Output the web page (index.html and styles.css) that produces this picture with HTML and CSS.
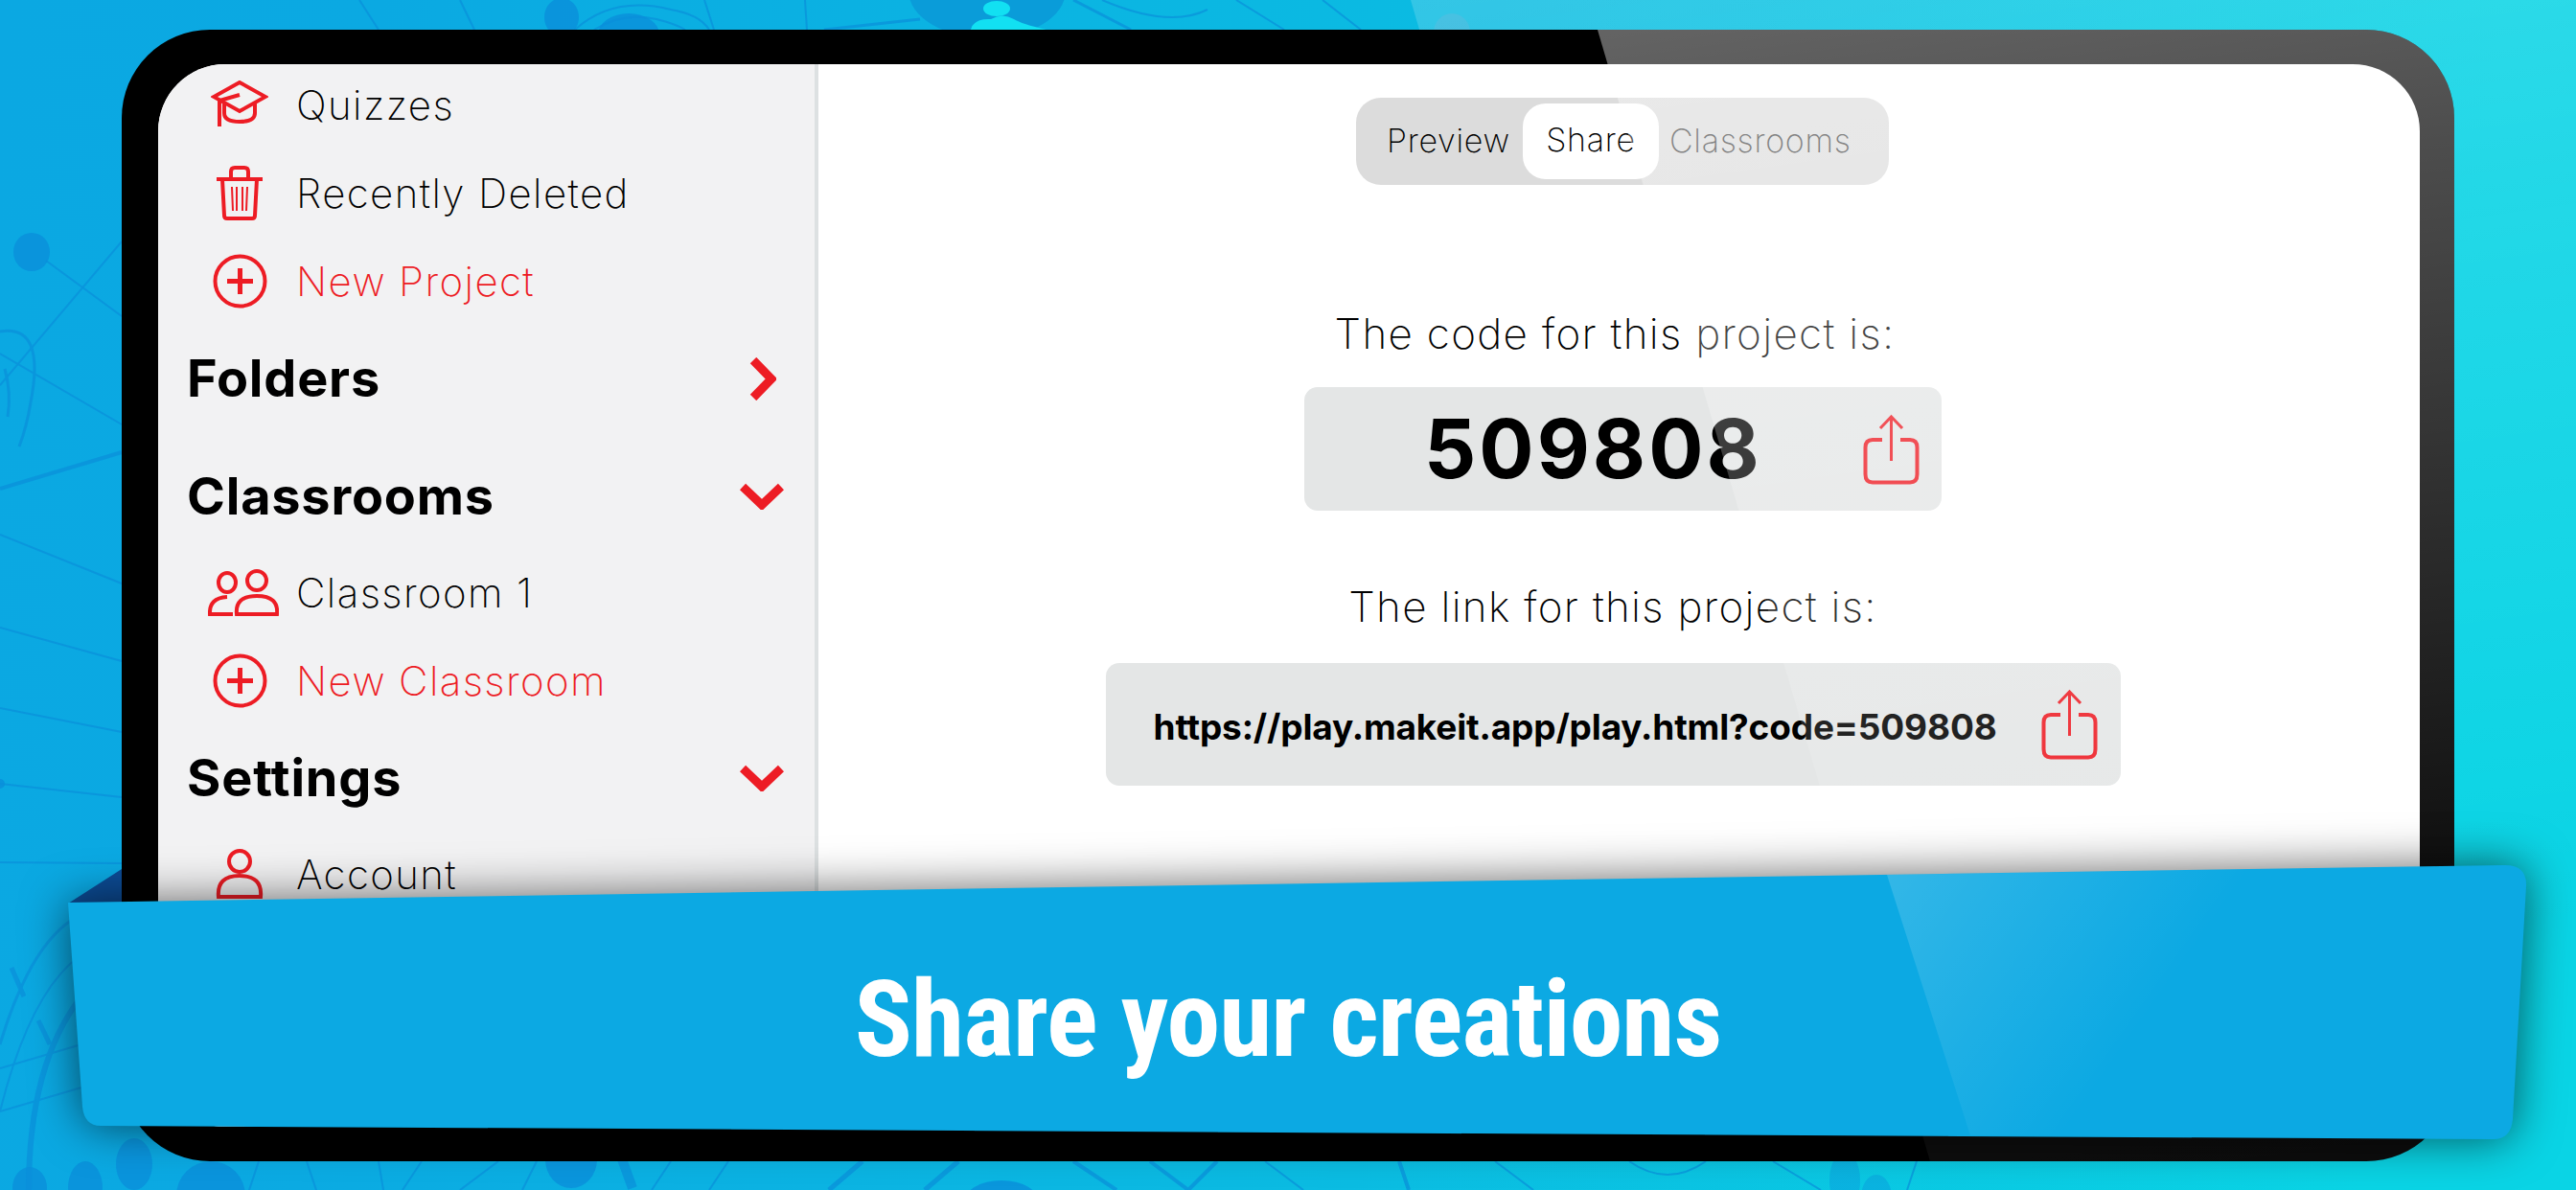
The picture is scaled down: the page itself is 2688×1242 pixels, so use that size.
FILE: index.html
```html
<!DOCTYPE html>
<html lang="en">
<head>
  <meta charset="UTF-8" />
  <title>Share your creations</title>
  <link rel="stylesheet" href="styles.css">
</head>
<body>

  <!-- backdrop pattern -->
  <svg class="backdrop" viewBox="0 0 2688 1242">
    <g fill="#0a8fdb" opacity="0.8">
      <ellipse cx="33" cy="263" rx="19" ry="20" />
      <circle cx="0" cy="818" r="5" />
      <ellipse cx="586" cy="18" rx="18" ry="20" />
      <ellipse cx="656" cy="36" rx="32" ry="22" />
      <ellipse cx="140" cy="1215" rx="19" ry="27" />
      <ellipse cx="89" cy="1240" rx="18" ry="28" />
      <ellipse cx="31" cy="1240" rx="18" ry="22" />
      <ellipse cx="220" cy="1248" rx="36" ry="36" />
      <ellipse cx="596" cy="1210" rx="27" ry="30" />
      <ellipse cx="1045" cy="1256" rx="40" ry="24" />
      <ellipse cx="1925" cy="1232" rx="16" ry="30" opacity="0.45" />
      <ellipse cx="1958" cy="1250" rx="16" ry="24" opacity="0.45" />
    </g>
    <ellipse cx="1030" cy="-10" rx="82" ry="50" fill="#0a9cd9" />
    <ellipse cx="1040" cy="9" rx="14" ry="8" fill="#12e0f2" />
    <path d="M1013 31 Q1016 19 1034 20 Q1046 13 1058 20 Q1066 25 1092 31 Z" fill="#12e0f2" />
    <ellipse cx="1515" cy="34" rx="19" ry="20" fill="#2fb4dc" opacity="0.7" />
    <g fill="none" stroke="#0a8fdb" stroke-width="2" opacity="0.7">
      <path d="M48 272 L127 330" />
      <path d="M0 402 L127 252" />
      <path d="M0 369 L127 443" />
      <path d="M0 510 L127 472" stroke-width="4" />
      <path d="M0 558 L127 609" />
      <path d="M0 655 L127 690" />
      <path d="M0 739 L127 764" />
      <path d="M0 818 L127 832" />
      <path d="M0 900 L127 901" />
      <path d="M0 346 Q48 338 32 420 Q28 445 20 466" stroke-width="3" />
      <path d="M5 385 Q12 410 8 435" stroke-width="3" />
      <path d="M0 1090 Q30 990 75 960" stroke-width="3" />
      <path d="M0 1160 Q30 1040 80 1000" stroke-width="2" />
      <path d="M30 1242 Q30 1110 85 1040" stroke-width="6" />
      <path d="M0 1115 L85 1090" />
      <path d="M0 1160 L85 1135" />
      <path d="M12 1010 L25 1040" stroke-width="5" />
      <path d="M40 1065 L52 1090" stroke-width="5" />
      <path d="M375 0 L395 31" />
      <path d="M480 0 L495 31" />
      <path d="M600 31 Q640 -5 700 10 Q730 15 740 31" />
      <path d="M620 31 Q650 12 685 20 Q705 25 715 31" />
      <path d="M735 0 L745 31" />
      <path d="M840 0 L842 31" />
      <path d="M860 31 L960 20" stroke-width="3" />
      <path d="M1120 0 L1180 31" stroke-width="3" />
      <path d="M1150 0 Q1220 30 1260 10" />
      <path d="M1290 0 L1340 31" />
      <path d="M1380 0 L1420 31" />
      <path d="M270 1212 L260 1242" />
      <path d="M320 1212 L330 1242" />
      <path d="M395 1212 L400 1242" />
      <path d="M440 1212 L420 1242" />
      <path d="M520 1212 L480 1242" />
      <path d="M560 1212 L545 1242" />
      <path d="M700 1212 L680 1242" />
      <path d="M760 1212 L740 1242" />
      <path d="M900 1212 L865 1242" stroke-width="5" />
      <path d="M1000 1212 L965 1242" stroke-width="5" />
      <path d="M1120 1212 L1165 1242" stroke-width="4" />
      <path d="M1200 1212 L1240 1242" stroke-width="4" />
      <path d="M1270 1212 L1240 1242" stroke-width="4" />
      <path d="M1320 1212 L1360 1242" />
      <path d="M1460 1212 L1470 1242" stroke-width="4" />
      <path d="M1560 1212 L1600 1242" />
      <path d="M1700 1212 Q1740 1240 1780 1212" />
      <path d="M1850 1212 L1900 1242" />
      <path d="M2000 1212 L1990 1242" />
    </g>
    <path d="M640 1185 L660 1240" stroke="#0a8fdb" stroke-width="10" opacity="0.7" />
  </svg>
  <div class="backdrop-gloss"></div>

  <div class="device">
    <div class="screen">

      <div class="sidebar">
        <div class="row first">
          <span class="row-icon">
            <svg width="60" height="50" viewBox="0 0 60 50" class="line">
              <path d="M30 2 L57 17 L30 32 L3 17 Z" />
              <path d="M14 24 V34 Q14 43 30 43 Q46 43 46 34 V24" />
              <path d="M30 15 L9 21 V48" />
            </svg>
          </span>
          Quizzes
        </div>
        <div class="row">
          <span class="row-icon">
            <svg width="50" height="57" viewBox="0 0 50 57" class="line">
              <path d="M1 14 H49" />
              <path d="M16 14 V6 Q16 2 20 2 H30 Q34 2 34 6 V14" />
              <path d="M7 14 L9 52 Q9 55 12 55 H38 Q41 55 41 52 L43 14" />
              <path d="M17 22 L18 47 M22 22 V47 M28 22 V47 M33 22 L32 47" stroke-width="2" />
            </svg>
          </span>
          Recently Deleted
        </div>
        <div class="row add">
          <span class="row-icon">
            <svg width="57" height="57" viewBox="0 0 57 57" class="line">
              <circle cx="28.5" cy="28.5" r="26" />
              <path d="M28.5 15 V42 M15 28.5 H42" stroke-width="5" />
            </svg>
          </span>
          New Project
        </div>

        <div class="section section-folders">
          Folders
          <svg width="28" height="45" viewBox="0 0 28 45" class="chevron chevron-right">
            <path d="M4 3 L23 22.5 L4 42" />
          </svg>
        </div>

        <div class="section">
          Classrooms
          <svg width="46" height="28" viewBox="0 0 46 28" class="chevron">
            <path d="M3 4 L23 23 L43 4" />
          </svg>
        </div>
        <div class="row">
          <span class="row-icon">
            <svg width="74" height="49" viewBox="0 0 74 49" class="line people">
              <ellipse cx="20" cy="14" rx="9" ry="10" />
              <ellipse cx="51" cy="12" rx="10" ry="10" />
              <path d="M26 47 H2 Q1 30 20 29" />
              <path d="M30 47 Q28 28 51 28 Q74 28 72 47 Z" />
            </svg>
          </span>
          Classroom 1
        </div>
        <div class="row add">
          <span class="row-icon">
            <svg width="57" height="57" viewBox="0 0 57 57" class="line">
              <circle cx="28.5" cy="28.5" r="26" />
              <path d="M28.5 15 V42 M15 28.5 H42" stroke-width="5" />
            </svg>
          </span>
          New Classroom
        </div>

        <div class="section">
          Settings
          <svg width="46" height="28" viewBox="0 0 46 28" class="chevron">
            <path d="M3 4 L23 23 L43 4" />
          </svg>
        </div>
        <div class="row">
          <span class="row-icon">
            <svg width="50" height="53" viewBox="0 0 50 53" class="line">
              <ellipse cx="25" cy="13" rx="11" ry="11" />
              <path d="M3 50 Q1 28 25 28 Q49 28 47 50 Z" />
            </svg>
          </span>
          Account
        </div>
      </div>

      <div class="main">
        <div class="tabs">
          <div class="tab tab-preview">Preview</div>
          <div class="tab tab-active">Share</div>
          <div class="tab tab-rooms">Classrooms</div>
        </div>

        <div class="label label-code">The code for this project is:</div>
        <div class="card card-code">
          <span class="code">509808</span>
          <svg width="59" height="74" viewBox="0 0 59 74" class="line share">
            <path d="M20 27 H10 Q2.500 27 2.500 35 V63 Q2.500 71.500 10 71.500 H49 Q56.500 71.500 56.500 63 V35 Q56.500 27 49 27 H39" />
            <path d="M29.500 49 V3 M18 15 L29.500 3 L41 15" stroke-width="3" />
          </svg>
        </div>

        <div class="label label-link">The link for this project is:</div>
        <div class="card card-link">
          <span class="link">https://play.makeit.app/play.html?code=509808</span>
          <svg width="59" height="74" viewBox="0 0 59 74" class="line share">
            <path d="M20 27 H10 Q2.500 27 2.500 35 V63 Q2.500 71.500 10 71.500 H49 Q56.500 71.500 56.500 63 V35 Q56.500 27 49 27 H39" />
            <path d="M29.500 49 V3 M18 15 L29.500 3 L41 15" stroke-width="3" />
          </svg>
        </div>
      </div>

    </div>
    <div class="device-gloss"></div>
  </div>

  <svg class="banner-shape" viewBox="0 0 2688 1242">
    <defs>
      <linearGradient id="bannerGloss" gradientUnits="userSpaceOnUse" x1="1969" y1="913" x2="2220" y2="1090">
        <stop offset="0" stop-color="#fff" stop-opacity="0.16" />
        <stop offset="1" stop-color="#fff" stop-opacity="0" />
      </linearGradient>
    </defs>
    <polygon points="71,943 127,907 127,943" fill="#0c4b94" />
    <path class="banner-fill" d="M71 942 L2612 903 Q2637 902 2636 925 L2622 1168 Q2620 1190 2600 1189 L105 1175 Q88 1175 86 1155 Z" />
    <path d="M1969 913 L2612 903 Q2637 902 2636 925 L2622 1168 Q2620 1190 2600 1189 L2056 1185 Z" fill="url(#bannerGloss)" />
  </svg>
  <div class="banner-title">Share your creations</div>

</body>
</html>
```

FILE: styles.css
```css
html, body {
  margin: 0;
  padding: 0;
  height: 100%;
}

body {
  position: relative;
  box-sizing: border-box;
  height: 1242px;
  overflow: hidden;
  padding: 31px 127px 30px 127px;
  font-family: Inter, "Liberation Sans", sans-serif;
  background: linear-gradient(97deg, #0ba8e2 0%, #0ba9e2 14%, #0bbce2 55%, #0ad4e5 92%);
}

.backdrop {
  position: absolute;
  left: 0;
  top: 0;
  width: 2688px;
  height: 1242px;
}

.backdrop-gloss {
  position: absolute;
  left: 0;
  top: 0;
  width: 2688px;
  height: 1242px;
  clip-path: polygon(1472px 0, 1836px 1242px, 2688px 1242px, 2688px 0);
  background: linear-gradient(172deg, rgba(255, 255, 255, 0.2) 0%, rgba(255, 255, 255, 0.09) 40%, rgba(255, 255, 255, 0) 85%);
}

.device {
  position: relative;
  box-sizing: border-box;
  width: 2434px;
  height: 1181px;
  padding: 36px 36px 36px 38px;
  background: #000;
  border-radius: 92px;
  overflow: hidden;
}

.device-gloss {
  position: absolute;
  left: 0;
  top: 0;
  width: 100%;
  height: 100%;
  clip-path: polygon(1540px 0, 1887px 1181px, 2434px 1181px, 2434px 0);
  background: linear-gradient(172deg, rgba(255, 255, 255, 0.47) 0%, rgba(255, 255, 255, 0.3) 30%, rgba(255, 255, 255, 0.07) 78%, rgba(255, 255, 255, 0.05) 100%);
}

.screen {
  display: flex;
  height: 100%;
  background: #fff;
  border-radius: 70px;
  overflow: hidden;
}

/* sidebar */
.sidebar {
  box-sizing: border-box;
  width: 689px;
  flex-shrink: 0;
  background: #f2f2f3;
  border-right: 4px solid #dde1e2;
}

.row {
  display: flex;
  align-items: center;
  gap: 22px;
  height: 92px;
  padding-left: 48px;
  font-size: 42px;
  font-weight: 200;
  letter-spacing: 1.4px;
  color: #000;
}

.row.first {
  margin-top: -4px;
}

.row.add {
  color: #ed1c24;
}

.row-icon {
  display: flex;
  align-items: center;
  justify-content: center;
  width: 74px;
}

.line {
  fill: none;
  stroke: #ed1c24;
  stroke-width: 4;
}

.people {
  transform: translateX(4px);
}

.section {
  display: flex;
  align-items: center;
  justify-content: space-between;
  box-sizing: border-box;
  width: 678px;
  height: 110px;
  padding: 0 25px 0 30px;
  font-size: 54px;
  font-weight: 700;
  letter-spacing: 0.8px;
  color: #000;
}

.section-folders {
  margin-bottom: 13px;
}

.chevron {
  margin-top: 2px;
  fill: none;
  stroke: #ed1c24;
  stroke-width: 9;
}

.chevron-right {
  margin-right: 8px;
}

/* right side */
.main {
  flex-grow: 1;
  display: flex;
  flex-direction: column;
  align-items: center;
  padding-top: 35px;
}

.tabs {
  display: flex;
  align-items: center;
  box-sizing: border-box;
  width: 556px;
  height: 91px;
  margin-left: 7px;
  padding: 0 6px;
  background: #dcdcdc;
  border-radius: 26px;
}

.tab {
  font-size: 34px;
  font-weight: 200;
  letter-spacing: 0.7px;
  color: #000;
}

.tab-preview {
  width: 168px;
  padding-left: 26px;
  padding-bottom: 3px;
  box-sizing: border-box;
}

.tab-active {
  width: 142px;
  height: 79px;
  line-height: 76px;
  text-align: center;
  background: #fff;
  border-radius: 24px;
}

.tab-rooms {
  padding-left: 11px;
  padding-bottom: 3px;
  color: #444;
}

.label {
  height: 60px;
  line-height: 60px;
  font-size: 44px;
  font-weight: 200;
  letter-spacing: 1.3px;
  color: #000;
}

.label-code {
  margin-top: 125px;
  margin-right: 9px;
}

.label-link {
  margin-top: 70px;
  margin-right: 13px;
}

.card {
  display: flex;
  align-items: center;
  justify-content: space-between;
  box-sizing: border-box;
  background: #e4e6e6;
  border-radius: 14px;
}

.card-code {
  width: 665px;
  height: 129px;
  margin-top: 26px;
  margin-left: 8px;
  padding: 0 23px 0 125px;
}

.card-link {
  width: 1059px;
  height: 128px;
  margin-top: 29px;
  margin-right: 13px;
  padding: 0 24px 0 50px;
}

.code {
  font-size: 85px;
  font-weight: 700;
  letter-spacing: 3px;
  color: #000;
}

.link {
  padding-top: 5px;
  font-size: 37px;
  font-weight: 700;
  letter-spacing: -0.15px;
  color: #000;
}

/* banner on top */
.banner-shape {
  position: absolute;
  left: 0;
  top: 0;
  width: 2688px;
  height: 1242px;
}

.banner-fill {
  fill: #0ca9e3;
  filter: drop-shadow(0 0 24px rgba(0, 0, 0, 0.6));
}

.banner-title {
  position: absolute;
  left: 0;
  top: 994px;
  width: 2688px;
  height: 140px;
  line-height: 140px;
  text-align: center;
  font-family: Roboto, "Liberation Sans", sans-serif;
  font-stretch: condensed;
  font-size: 112px;
  font-weight: 700;
  letter-spacing: -1px;
  color: #fff;
}
```
